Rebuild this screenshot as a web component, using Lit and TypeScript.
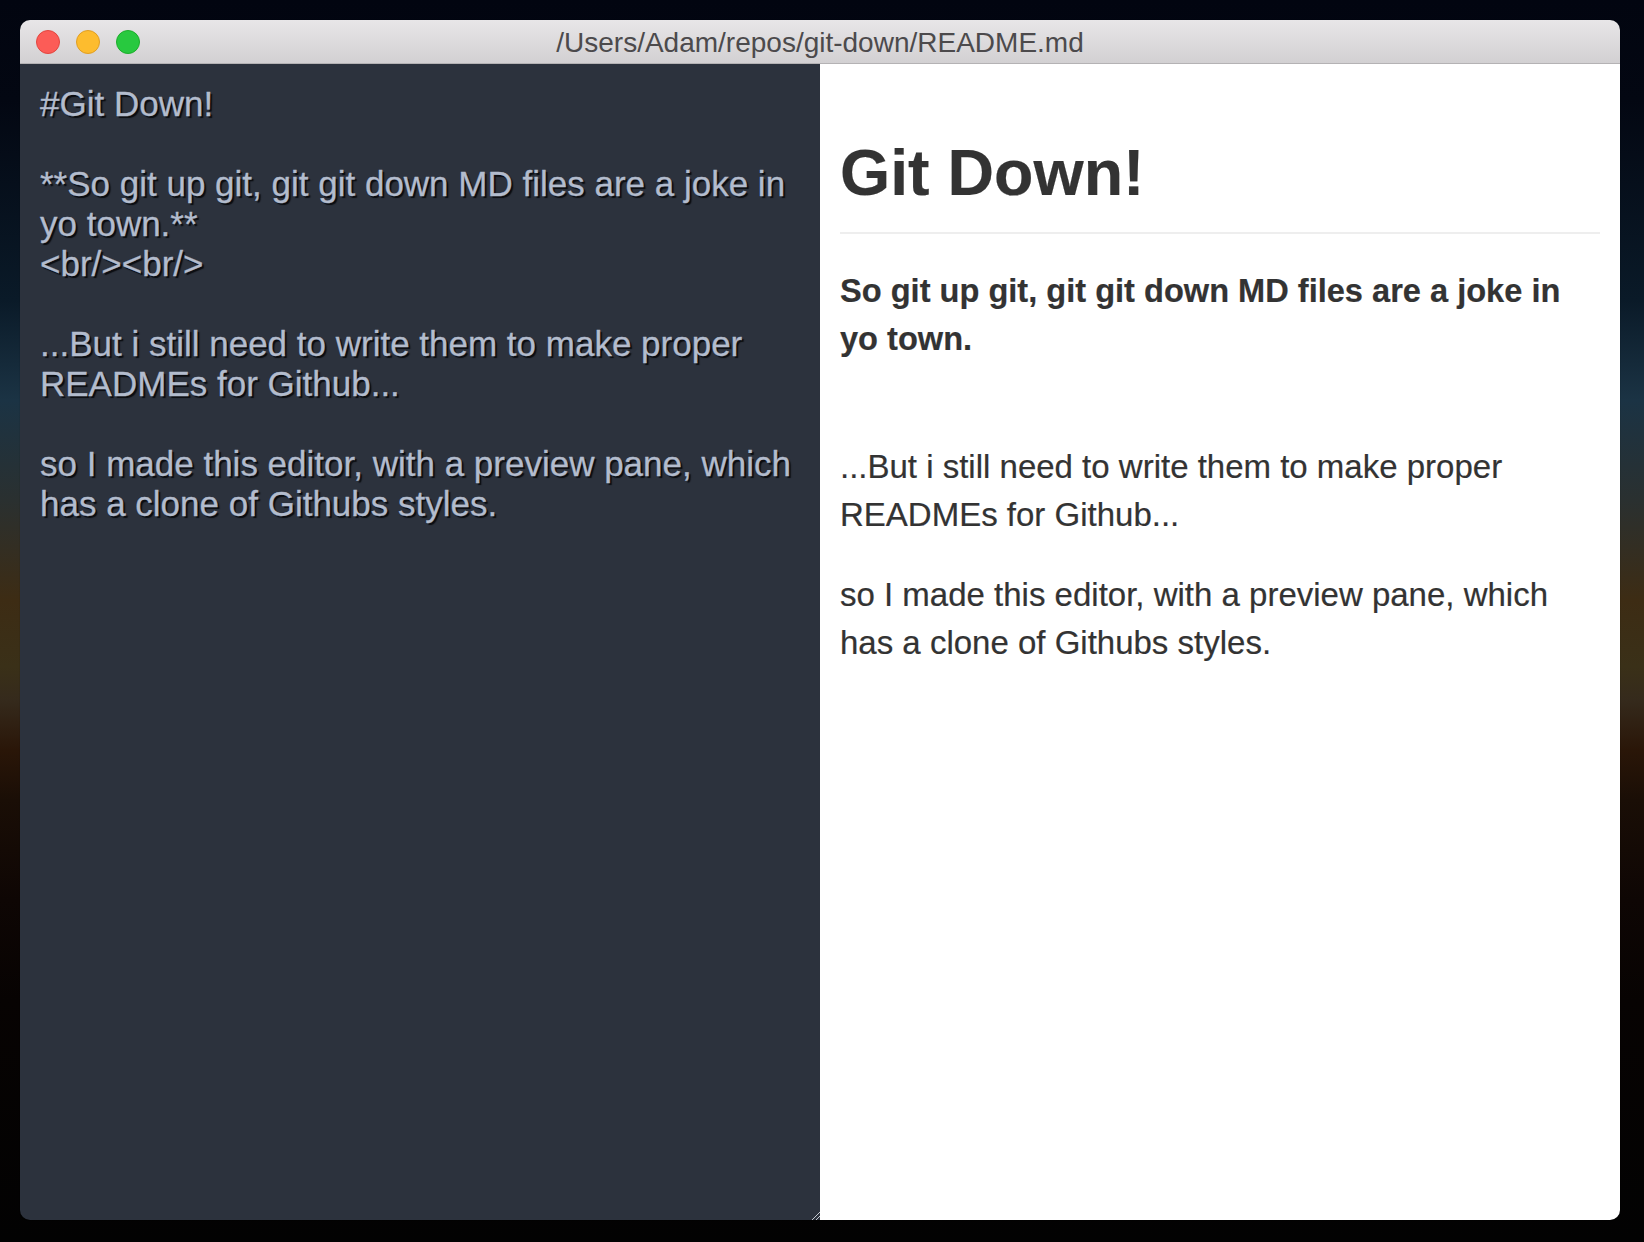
import { LitElement, html, css } from "lit";
import { customElement } from "lit/decorators.js";

@customElement("app-root")
export class AppRoot extends LitElement {
  static styles = css`
    :host {
      display: block;
      width: 1644px;
      height: 1242px;
      overflow: hidden;
      font-family: "Liberation Sans", Arial, sans-serif;
    }
    .desktop {
      box-sizing: border-box;
      width: 1644px;
      height: 1242px;
      padding: 20px 24px 22px 20px;
      background: linear-gradient(180deg, #020510 0, #030712 100px, #0a1a28 300px, #1b3344 400px, #2a3030 500px, #3d2c14 600px, #3a3018 667px, #352a1c 700px, #2a1608 750px, #1a0e06 800px, #0e0604 900px, #070302 1000px, #020202 1242px);
    }
    .window {
      height: 100%;
      display: flex;
      flex-direction: column;
      border-radius: 10px;
      overflow: hidden;
      box-shadow: 0 0 1px rgba(0, 0, 0, 0.6);
    }
    .titlebar {
      flex: none;
      box-sizing: border-box;
      height: 44px;
      position: relative;
      display: flex;
      align-items: center;
      justify-content: center;
      background: linear-gradient(180deg, #e8e6e8 0, #d2d0d2 100%);
      border-bottom: 1px solid #b4b2b4;
    }
    .lights {
      position: absolute;
      left: 16px;
      top: 10px;
      display: flex;
      gap: 16px;
    }
    .light {
      box-sizing: border-box;
      width: 24px;
      height: 24px;
      border-radius: 50%;
      border: 1px solid;
    }
    .red { background: #fc5c57; border-color: #e2463f; }
    .yellow { background: #fdbc2e; border-color: #e09e23; }
    .green { background: #28c93f; border-color: #1dad2b; }
    .title {
      font-size: 28px;
      line-height: 44px;
      padding-top: 2px;
      color: #4c4a4c;
      white-space: nowrap;
    }
    .panes {
      flex: 1;
      display: flex;
      min-height: 0;
    }
    .pane {
      flex: 1 1 0;
      min-width: 0;
      box-sizing: border-box;
      position: relative;
    }
    .editor {
      background: #2c323d;
      color: #b3bccd;
      font-size: 35px;
      line-height: 40px;
      padding: 20px;
      white-space: pre-wrap;
      text-shadow: 2px 2px 1px #0a0c10;
      -webkit-text-stroke: 0.3px #b3bccd;
    }
    .grip {
      position: absolute;
      right: 0;
      bottom: 0;
      width: 8px;
      height: 8px;
    }
    .preview {
      background: #fff;
      color: #333;
      font-size: 33px;
      line-height: 48px;
      padding: 40px 20px 20px;
      -webkit-text-stroke: 0.2px #333;
    }
    h1 {
      margin: 28px 0 33px;
      padding: 0 0 18px;
      font-size: 64.5px;
      line-height: 82px;
      font-weight: 700;
      border-bottom: 2px solid #eee;
    }
    p {
      margin: 0 0 32px;
    }
    strong {
      font-size: 32.6px;
    }
    .brk {
      display: block;
      height: 48px;
    }
  `;

  render() {
    const src = `#Git Down!

**So git up git, git git down MD files are a joke in yo town.**
<br/><br/>

...But i still need to write them to make proper READMEs for Github...

so I made this editor, with a preview pane, which has a clone of Githubs styles.`;
    return html`
      <div class="desktop">
        <div class="window">
          <div class="titlebar">
            <div class="lights">
              <div class="light red"></div>
              <div class="light yellow"></div>
              <div class="light green"></div>
            </div>
            <div class="title">/Users/Adam/repos/git-down/README.md</div>
          </div>
          <div class="panes">
            <div class="pane editor">${src}<svg class="grip" viewBox="0 0 8 8" aria-hidden="true"><path d="M0 8L8 0M4 8L8 4" stroke="#c4c8d0" stroke-width="1" fill="none" /></svg></div>
            <div class="pane preview">
              <h1>Git Down!</h1>
              <p><strong>So git up git, git git down MD files are a joke in<br />yo town.</strong><span class="brk"></span></p>
              <p>...But i still need to write them to make proper READMEs for Github...</p>
              <p>so I made this editor, with a preview pane, which has a clone of Githubs styles.</p>
            </div>
          </div>
        </div>
      </div>
    `;
  }
}
